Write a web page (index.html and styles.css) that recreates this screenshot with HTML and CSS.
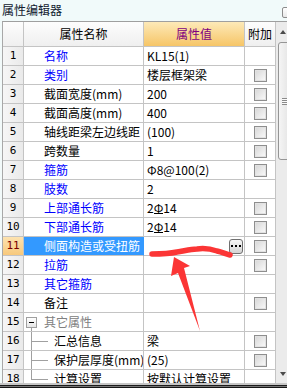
FILE: index.html
```html
<!DOCTYPE html>
<html lang="zh-CN">

<head>
  <meta charset="UTF-8">
  <meta name="viewport" content="width=device-width, initial-scale=1.0">
  <title>属性编辑器</title>
  <link rel="stylesheet" href="styles.css">
</head>

<body>
  <div class="window">
    <div class="titlebar">
      <span class="title">属性编辑器</span>
      <span class="close-btn"></span>
    </div>

    <div class="editor">
      <div class="grid">
        <div class="row head">
          <div class="num"></div>
          <div class="name">属性名称</div>
          <div class="value">属性值</div>
          <div class="extra">附加</div>
        </div>
        <div class="row">
          <div class="num">1</div>
          <div class="name link">名称</div>
          <div class="value">KL15(1)</div>
          <div class="extra"></div>
        </div>
        <div class="row">
          <div class="num">2</div>
          <div class="name link">类别</div>
          <div class="value">楼层框架梁</div>
          <div class="extra"><span class="check"></span></div>
        </div>
        <div class="row">
          <div class="num">3</div>
          <div class="name">截面宽度(mm)</div>
          <div class="value">200</div>
          <div class="extra"><span class="check"></span></div>
        </div>
        <div class="row">
          <div class="num">4</div>
          <div class="name">截面高度(mm)</div>
          <div class="value">400</div>
          <div class="extra"><span class="check"></span></div>
        </div>
        <div class="row">
          <div class="num">5</div>
          <div class="name">轴线距梁左边线距</div>
          <div class="value">(100)</div>
          <div class="extra"><span class="check"></span></div>
        </div>
        <div class="row">
          <div class="num">6</div>
          <div class="name">跨数量</div>
          <div class="value">1</div>
          <div class="extra"><span class="check"></span></div>
        </div>
        <div class="row">
          <div class="num">7</div>
          <div class="name link">箍筋</div>
          <div class="value">Φ8@100(2)</div>
          <div class="extra"><span class="check"></span></div>
        </div>
        <div class="row">
          <div class="num">8</div>
          <div class="name link">肢数</div>
          <div class="value">2</div>
          <div class="extra"></div>
        </div>
        <div class="row">
          <div class="num">9</div>
          <div class="name link">上部通长筋</div>
          <div class="value">2<span class="hrb">Φ</span>14</div>
          <div class="extra"><span class="check"></span></div>
        </div>
        <div class="row">
          <div class="num">10</div>
          <div class="name link">下部通长筋</div>
          <div class="value">2<span class="hrb">Φ</span>14</div>
          <div class="extra"><span class="check"></span></div>
        </div>
        <div class="row">
          <div class="num current">11</div>
          <div class="name selected">侧面构造或受扭筋</div>
          <div class="value editing">
            <span class="more-btn">
              <svg width="10" height="4" viewBox="0 0 10 4">
                <rect x="0" y="1" width="2" height="2" fill="#000" />
                <rect x="4" y="1" width="2" height="2" fill="#000" />
                <rect x="8" y="1" width="2" height="2" fill="#000" />
              </svg>
            </span>
          </div>
          <div class="extra"><span class="check"></span></div>
        </div>
        <div class="row">
          <div class="num">12</div>
          <div class="name link">拉筋</div>
          <div class="value"></div>
          <div class="extra"><span class="check"></span></div>
        </div>
        <div class="row">
          <div class="num">13</div>
          <div class="name link">其它箍筋</div>
          <div class="value"></div>
          <div class="extra"></div>
        </div>
        <div class="row">
          <div class="num">14</div>
          <div class="name">备注</div>
          <div class="value"></div>
          <div class="extra"><span class="check"></span></div>
        </div>
        <div class="row">
          <div class="num">15</div>
          <div class="name group"><span class="toggle"></span>其它属性</div>
          <div class="value"></div>
          <div class="extra"></div>
        </div>
        <div class="row">
          <div class="num">16</div>
          <div class="name child"><span class="branch"></span>汇总信息</div>
          <div class="value">梁</div>
          <div class="extra"><span class="check"></span></div>
        </div>
        <div class="row">
          <div class="num">17</div>
          <div class="name child"><span class="branch"></span>保护层厚度(mm)</div>
          <div class="value">(25)</div>
          <div class="extra"><span class="check"></span></div>
        </div>
        <div class="row">
          <div class="num">18</div>
          <div class="name child"><span class="branch last"></span>计算设置</div>
          <div class="value">按默认计算设置</div>
          <div class="extra"></div>
        </div>
      </div>

      <div class="vscroll">
        <div class="arrow"><span class="tri up"></span></div>
        <div class="thumb"><span class="grip"></span></div>
        <div class="track"></div>
        <div class="arrow"><span class="tri down"></span></div>
      </div>
    </div>

    <div class="bottom-edge"></div>
  </div>

  <!-- hand drawn red mark over the grid -->
  <svg class="marks" width="287" height="388" viewBox="0 0 287 388">
    <path d="M152,254 C160,254 168,254 177,252 C184,251 190,249 197,249 C204,248 211,249 217,251 C222,252 226,254 230,255"
      fill="none" stroke="#fb3535" stroke-width="5.5" stroke-linecap="round" />
    <path d="M174,257 L190,266 L184,268 L200,331 L178,273 L171,276 Z" fill="#fb3535" />
  </svg>
</body>

</html>
```

FILE: styles.css
```css
* {
  box-sizing: border-box;
}

body {
  margin: 0;
  width: 287px;
  height: 388px;
  overflow: hidden;
  position: relative;
  background: #f2fafa;
  font-family: "Noto Sans CJK SC", sans-serif;
  font-size: 12px;
  color: #000;
}

.window {
  display: flex;
  flex-direction: column;
  height: 388px;
}

.titlebar {
  height: 21px;
  flex: none;
  display: flex;
  align-items: flex-start;
  padding-left: 2px;
  background: #f1fafa;
}

.title {
  line-height: 20px;
  color: #14202e;
  text-shadow: 0 0 2px #ffffff, 0 0 1px #bfe8f0;
}

.close-btn {
  margin-left: auto;
  margin-right: -10px;
  margin-top: 7px;
  width: 15px;
  height: 11px;
  border: 1px solid #8c8c8c;
  border-radius: 2px;
  background: linear-gradient(#ffffff, #e8e8e8);
}

.editor {
  flex: 1;
  display: flex;
  overflow: hidden;
  margin-left: 2px;
  border-top: 1px solid #9f9f9f;
  border-left: 1px solid #a8a8a8;
  background: #fff;
}

.grid {
  width: 273px;
  flex: none;
}

.row {
  display: grid;
  grid-template-columns: 21px 120px 101px 31px;
  height: 19px;
}

.row > div {
  border-right: 1px solid #c4c4c4;
  border-bottom: 1px solid #c4c4c4;
  line-height: 18px;
  white-space: nowrap;
  overflow: hidden;
  background: #fff;
}

.row.head {
  height: 25px;
}

.row.head > div {
  line-height: 24px;
  text-align: center;
  background: linear-gradient(#fdfdfd, #efefef);
  padding: 0;
}

.row.head .value {
  background: linear-gradient(#fde9b8, #f6c567);
  color: #800080;
}

.row .num {
  text-align: center;
  font-family: "DejaVu Sans Mono", monospace;
  font-size: 11px;
  background: linear-gradient(90deg, #f6f6f6, #eaeaea);
}

.row .num.current {
  background: linear-gradient(#fde3b0, #f7c97c);
  color: #7a0000;
}

.name {
  padding-left: 20px;
}

.name.link {
  color: #0000ff;
}

.row .name.selected {
  background: #3399ff;
  color: #fff;
  border-right-color: #3399ff;
}

.name.group {
  display: flex;
  align-items: center;
  padding-left: 2px;
  color: #808080;
}

.toggle {
  position: relative;
  width: 11px;
  height: 11px;
  margin-right: 7px;
  border: 1px solid #a0a0a0;
  background: linear-gradient(#000, #000) center / 5px 1px no-repeat, linear-gradient(#ffffff, #e6e6e6);
}

.toggle::after {
  content: "";
  position: absolute;
  left: 4px;
  top: 10px;
  width: 1px;
  height: 5px;
  background: #a0a0a0;
}

.name.child {
  display: flex;
  padding-left: 7px;
}

.branch {
  width: 23px;
  height: 18px;
  flex: none;
  background:
    linear-gradient(#a0a0a0, #a0a0a0) 0 0 / 1px 100% no-repeat,
    linear-gradient(#a0a0a0, #a0a0a0) 0 9px / 17px 1px no-repeat;
}

.branch.last {
  background:
    linear-gradient(#a0a0a0, #a0a0a0) 0 0 / 1px 10px no-repeat,
    linear-gradient(#a0a0a0, #a0a0a0) 0 9px / 17px 1px no-repeat;
}

.value {
  padding-left: 3px;
}

.hrb {
  display: inline-block;
  line-height: 11px;
  border-bottom: 1px solid #000;
}

.value.editing {
  display: flex;
  align-items: center;
  padding-right: 1px;
}

.more-btn {
  margin-left: auto;
  width: 14px;
  height: 15px;
  display: flex;
  align-items: center;
  justify-content: center;
  border: 1px solid #6f6f6f;
  border-radius: 3px;
  background: linear-gradient(#f6f6f6, #d4d4d4);
}

.extra {
  display: flex;
  align-items: center;
  justify-content: center;
}

.check {
  width: 13px;
  height: 13px;
  border: 1px solid #8e8e8e;
  box-shadow: inset 0 0 0 1px #e2e2e2;
  background: linear-gradient(135deg, #d6d6d6, #fbfbfb);
}

.vscroll {
  width: 17px;
  flex: none;
  display: flex;
  flex-direction: column;
  background: #ebebeb;
}

.arrow {
  height: 19px;
  flex: none;
  display: flex;
  align-items: center;
  padding-left: 4px;
}

.tri {
  width: 0;
  height: 0;
  border-left: 3.5px solid transparent;
  border-right: 3.5px solid transparent;
}

.tri.up {
  border-bottom: 4px solid #4a4a4a;
}

.tri.down {
  border-top: 4px solid #4a4a4a;
}

.thumb {
  height: 118px;
  flex: none;
  margin: 1px 0 0 2px;
  display: flex;
  align-items: center;
  padding-left: 3px;
  border: 1px solid #959595;
  border-radius: 3px;
  background: linear-gradient(90deg, #f5f5f5, #e0e0e0);
}

.grip {
  width: 8px;
  height: 7px;
  background: repeating-linear-gradient(#8a8a8a 0 1px, #fafafa 1px 2px);
}

.track {
  flex: 1;
}

.bottom-edge {
  height: 5px;
  flex: none;
  background: linear-gradient(#c6c6c6 0 2px, #1c1c1c 2px 3px, #767676 3px 4px, #161616 4px);
}

.marks {
  position: absolute;
  left: 0;
  top: 0;
  pointer-events: none;
}
```
